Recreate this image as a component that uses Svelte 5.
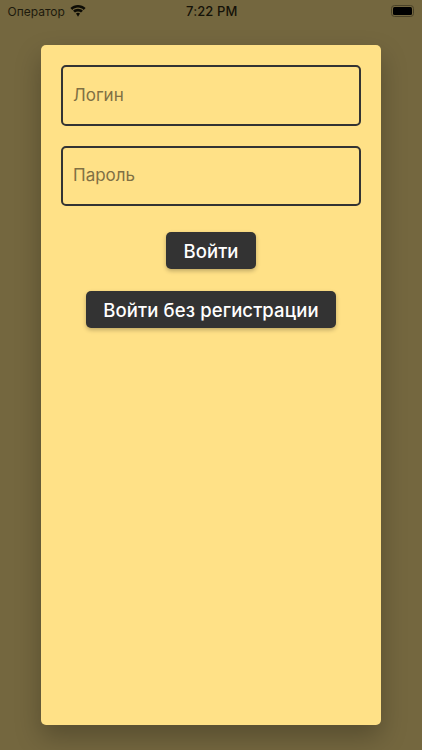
<script lang="ts">
	const fields = ["Логин", "Пароль"]
</script>

<div class="screen">
	<header class="status">
		<div class="left">
			<span class="carrier">Оператор</span>
			<svg class="wifi" width="16" height="12" viewBox="0 0 16 12" aria-hidden="true">
				<path d="M8 2.600c2.200 0 4.200.9 5.700 2.300L15.600 3C13.600 1.100 10.900 0 8 0S2.400 1.100.4 3l1.900 1.900C3.800 3.500 5.800 2.600 8 2.600z" />
				<path d="M8 6.400c1.200 0 2.200.4 3 1.200l1.900-1.900C11.600 4.500 9.900 3.800 8 3.800S4.400 4.500 3.100 5.700L5 7.600c.8-.8 1.800-1.200 3-1.200z" />
				<path d="M8 7.800c-.8 0-1.500.3-2 .8L8 11.800l2-3.200c-.5-.5-1.200-.8-2-.8z" />
			</svg>
		</div>
		<span class="time">7:22 PM</span>
		<div class="battery"><span class="level"></span></div>
	</header>

	<main class="card">
		{#each fields as field}
			<input class="field" placeholder={field} type="text" />
		{/each}
		<button class="btn first">Войти</button>
		<button class="btn">Войти без регистрации</button>
	</main>
</div>

<style>
	:global(body) {
		margin: 0;
		background: #74673f;
	}

	.screen {
		height: 750px;
		box-sizing: border-box;
		padding: 0 41px 25px;
		display: flex;
		flex-direction: column;
		background: #74673f;
		font-family: Inter, "Noto Sans", sans-serif;
		overflow: hidden;
	}

	.status {
		height: 45px;
		flex: none;
		margin: 0 -41px;
		padding: 0 8px 23px 7.500px;
		box-sizing: border-box;
		display: grid;
		grid-template-columns: 1fr auto 1fr;
		align-items: center;
		color: #141208;
	}

	.left {
		display: flex;
		align-items: center;
		gap: 5px;
	}

	.carrier {
		font-size: 12px;
		color: #1d1a0d;
	}

	.wifi {
		fill: #0d0c05;
		margin-top: -1px;
	}

	.time {
		font-size: 13px;
		font-weight: 500;
		letter-spacing: 0.1px;
		margin-left: 2px;
	}

	.battery {
		justify-self: end;
		width: 23px;
		height: 12px;
		box-sizing: border-box;
		border: 1px solid #4a4228;
		border-radius: 3.500px;
		padding: 1px;
		display: flex;
	}

	.level {
		flex: 1;
		background: #000;
		border-radius: 1.500px;
	}

	.card {
		flex: 1;
		box-sizing: border-box;
		padding: 20px;
		display: flex;
		flex-direction: column;
		align-items: center;
		background: #ffe187;
		border-radius: 5px;
		box-shadow: 0 12px 26px rgba(0, 0, 0, 0.25);
	}

	.field {
		width: 100%;
		height: 60.500px;
		flex: none;
		box-sizing: border-box;
		margin-bottom: 20px;
		padding: 0 10px 1.500px;
		border: 2px solid #333;
		border-radius: 5px;
		background: transparent;
		font: 17px Inter, "Noto Sans", sans-serif;
		color: #333;
		outline: none;
	}

	.field::placeholder {
		color: #807044;
		opacity: 1;
	}

	.btn {
		height: 37px;
		flex: none;
		padding: 0 17px;
		margin-bottom: 22px;
		border: none;
		border-radius: 5px;
		background: #333;
		color: #fff;
		font: 500 18.500px Inter, "Noto Sans", sans-serif;
		letter-spacing: 0.1px;
		box-shadow: 0 2px 4px rgba(0, 0, 0, 0.25);
	}

	.first {
		margin-top: 6px;
		padding: 0 17.500px;
	}
</style>
